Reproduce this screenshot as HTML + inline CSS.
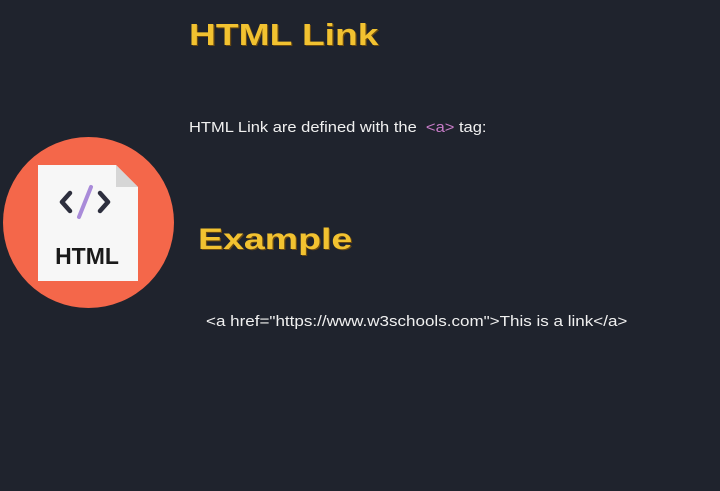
<!DOCTYPE html>
<html><head><meta charset="utf-8"><style>
html,body{margin:0;padding:0}
body{width:720px;height:491px;background:#1f232d;position:relative;overflow:hidden;font-family:"Liberation Sans",sans-serif}
.t{position:absolute;color:#f2c230;font-weight:bold;transform-origin:0 0;white-space:nowrap;text-shadow:1px 1px 0 #6b4a10}
.b{position:absolute;color:#f0f0f0;font-size:15px;white-space:nowrap;transform-origin:0 0}
</style></head><body>
<div class="t" style="left:189px;top:17px;font-size:31px;transform:scaleX(1.2)">HTML Link</div>
<div class="b" style="left:189px;top:119px;transform:scaleX(1.1)">HTML Link are defined with the &nbsp;<span style="color:#c77bc7">&lt;a&gt;</span> tag:</div>
<div class="t" style="left:198px;top:223px;font-size:30px;transform:scaleX(1.25)">Example</div>
<div class="b" style="left:206px;top:313px;transform:scaleX(1.135)">&lt;a href="https://www.w3schools.com"&gt;This is a link&lt;/a&gt;</div>
<div style="position:absolute;left:3px;top:137px;width:171px;height:171px;border-radius:50%;background:#f4674a"></div>
<svg style="position:absolute;left:38px;top:165px" width="100" height="116" viewBox="0 0 100 116">
<path d="M0 0H78L100 22V116H0Z" fill="#f7f7f7"/>
<path d="M78 0V22H100Z" fill="#d6d6d6"/>
<path d="M32 28L24 37L32 46" stroke="#2d2f3e" stroke-width="4.5" fill="none" stroke-linecap="round" stroke-linejoin="round"/>
<path d="M62 28L70 37L62 46" stroke="#2d2f3e" stroke-width="4.5" fill="none" stroke-linecap="round" stroke-linejoin="round"/>
<path d="M53 22L41 52" stroke="#a98bd9" stroke-width="4" stroke-linecap="round"/>
<text x="49" y="99" text-anchor="middle" font-family="Liberation Sans,sans-serif" font-weight="bold" font-size="23" fill="#1a1a1a">HTML</text>
</svg>
</body></html>
